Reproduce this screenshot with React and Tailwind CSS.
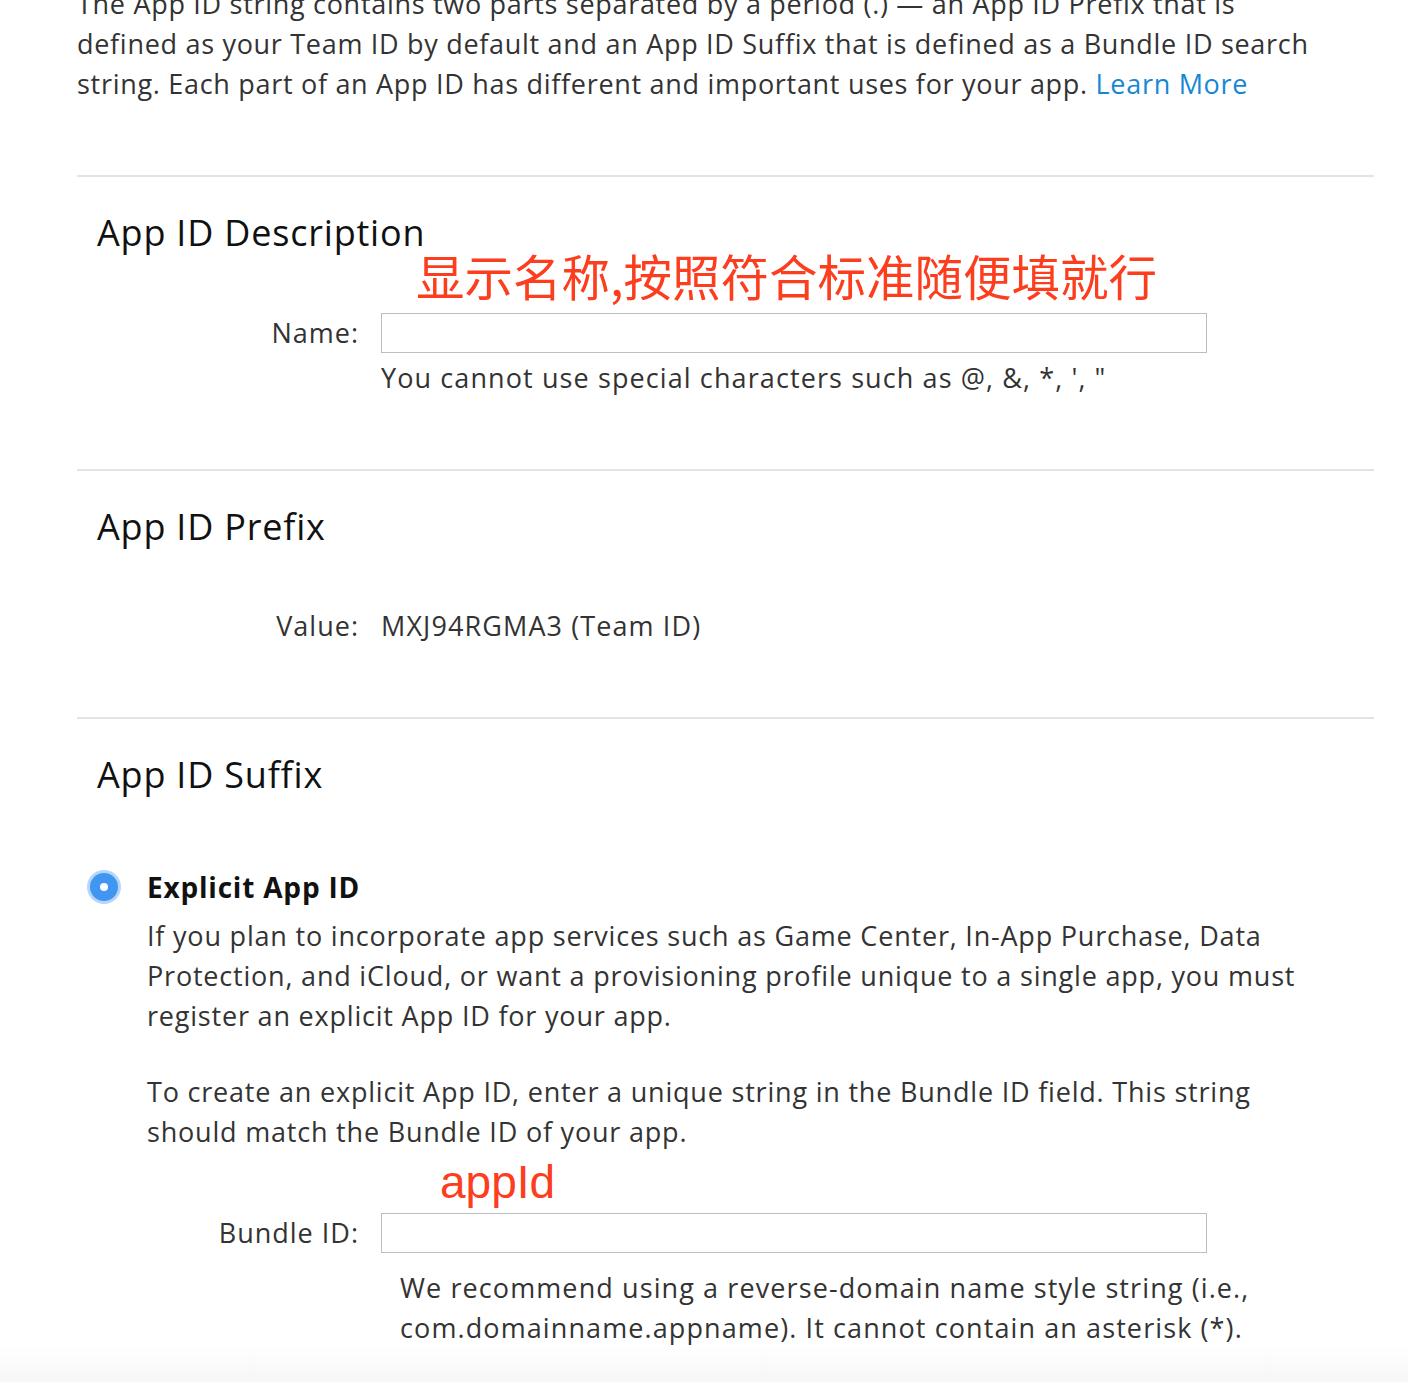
const body = "font-['Open_Sans','Noto_Sans',sans-serif]"

function Divider() {
  return <div className="h-[2px] bg-[#e4e4e4]" />
}

function FieldRow({ label, children }) {
  return (
    <div className="flex items-center">
      <div className="w-[282px] shrink-0 text-right text-[27px] leading-[40px] tracking-[1px] text-[#333]">
        {label}
      </div>
      <div className="ml-[22px]">{children}</div>
    </div>
  )
}

function TextBox() {
  return (
    <input
      type="text"
      className="block h-[40px] w-[826px] border border-[#bdbdbd] bg-white px-2 text-[24px] outline-none"
    />
  )
}

export default function App() {
  return (
    <div className={`relative min-h-[1382px] overflow-hidden bg-white ${body}`}>
      <div className="pl-[77px] pr-[34px]">
        <p className="-mt-[16px] whitespace-nowrap text-[27px] leading-[40px] tracking-[0.7px] text-[#333]">
          The App ID string contains two parts separated by a period (.) — an App ID Prefix that is
          <br />
          defined as your Team ID by default and an App ID Suffix that is defined as a Bundle ID search
          <br />
          string. Each part of an App ID has different and important uses for your app.{' '}
          <a href="#" className="text-[#1688d2]">Learn More</a>
        </p>

        <div className="mt-[71px]">
          <Divider />
          <section className="pt-[34px]">
            <h2 className="ml-[20px] text-[36px] leading-[44px] tracking-[0.8px] text-[#111]">App ID Description</h2>
            <div className="-mt-[8px] ml-[339px] whitespace-nowrap font-['Noto_Sans_CJK_SC',sans-serif] text-[48.5px] leading-[56px] text-[#fc3d1e]">
              显示名称,按照符合标准随便填就行
            </div>
            <div className="mt-[10px]">
              <FieldRow label="Name:">
                <TextBox />
              </FieldRow>
            </div>
            <p className="mt-[5px] ml-[304px] whitespace-nowrap text-[27px] leading-[40px] tracking-[1.1px] text-[#333]">
              You cannot use special characters such as @, &amp;, *, ', "
            </p>
          </section>
        </div>

        <div className="mt-[71px]">
          <Divider />
          <section className="pt-[34px]">
            <h2 className="ml-[20px] text-[36px] leading-[44px] tracking-[0.8px] text-[#111]">App ID Prefix</h2>
            <div className="mt-[57px]">
              <FieldRow label="Value:">
                <span className="text-[27px] leading-[40px] tracking-[1.1px] text-[#333]">MXJ94RGMA3 (Team ID)</span>
              </FieldRow>
            </div>
          </section>
        </div>

        <div className="mt-[71px]">
          <Divider />
          <section className="pt-[34px]">
            <h2 className="ml-[20px] text-[36px] leading-[44px] tracking-[0.8px] text-[#111]">App ID Suffix</h2>

            <div className="mt-[70px] flex items-center">
              <div className="ml-[10px] flex h-[34px] w-[34px] items-center justify-center rounded-full bg-[#b5d6f9]">
                <div className="flex h-[28px] w-[28px] items-center justify-center rounded-full bg-[#4196f2]">
                  <div className="h-[8px] w-[8px] rounded-full bg-white" />
                </div>
              </div>
              <div className="ml-[26px] text-[28px] font-bold leading-[40px] tracking-[0.8px] text-[#111]">Explicit App ID</div>
            </div>

            <div className="ml-[70px] whitespace-nowrap text-[27px] leading-[40px] tracking-[0.8px] text-[#333]">
              <p className="mt-[9px]">
                If you plan to incorporate app services such as Game Center, In-App Purchase, Data
                <br />
                Protection, and iCloud, or want a provisioning profile unique to a single app, you must
                <br />
                register an explicit App ID for your app.
              </p>
              <p className="mt-[36px]">
                To create an explicit App ID, enter a unique string in the Bundle ID field. This string
                <br />
                should match the Bundle ID of your app.
              </p>
            </div>

            <div className="mt-[5px] ml-[363px] font-['Liberation_Sans',Arial,sans-serif] text-[46px] leading-[50px] text-[#fc3d1e]">
              appId
            </div>

            <div className="mt-[6px]">
              <FieldRow label="Bundle ID:">
                <TextBox />
              </FieldRow>
            </div>

            <p className="mt-[15px] ml-[323px] whitespace-nowrap text-[27px] leading-[40px] tracking-[1.1px] text-[#333]">
              We recommend using a reverse-domain name style string (i.e.,
              <br />
              com.domainname.appname). It cannot contain an asterisk (*).
            </p>
          </section>
        </div>
      </div>

      <div className="pointer-events-none absolute inset-x-0 bottom-0 h-[36px] bg-gradient-to-b from-white to-[#f6f6f6]" />
    </div>
  )
}
